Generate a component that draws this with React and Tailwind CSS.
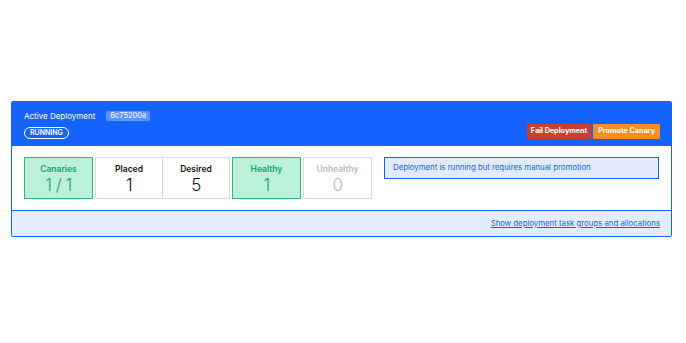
import React from "react";

const Stat = ({ label, value, tone = "plain", className = "" }) => {
  const tones = {
    success: "bg-[#bbf0d9] border-[#2eb67d] text-[#15a468]",
    plain: "bg-white border-[#d8dce3] text-[#111]",
    muted: "bg-white border-[#d8dce3] text-[#b4bac4]",
  };
  return (
    <div
      className={`flex flex-col items-center justify-center border h-[42px] pt-[1px] ${tones[tone]} ${className}`}
    >
      <div className="text-[8.5px] font-semibold leading-[12px]">{label}</div>
      <div className="text-[17px] font-light leading-[20px] tracking-[-0.5px]">{value}</div>
    </div>
  );
};

export default function App() {
  return (
    <div
      className="w-full h-[343px] bg-white pt-[101px] pl-[11px] pr-[14px]"
      style={{ fontFamily: "Inter, 'Noto Sans', sans-serif" }}
    >
      <div className="border border-[#1563ff] rounded-[2px] overflow-hidden">
        <div className="bg-[#1563ff] pl-[12px] pr-[11px] pt-[8px] pb-[6px] flex justify-between items-end">
          <div className="flex flex-col items-start">
            <div className="flex items-center">
              <span className="text-white text-[8px] leading-[12px]">Active Deployment</span>
              <span className="ml-[11px] bg-[#5d92ff] text-white text-[7.5px] leading-[10px] px-[4px] rounded-[1px]">
                6c75200a
              </span>
            </div>
            <span className="mt-[5px] border border-white rounded-full text-white text-[7px] font-semibold leading-[10px] px-[5px]">
              RUNNING
            </span>
          </div>
          <div className="flex gap-[2px]">
            <button className="bg-[#c9402f] text-white text-[7.2px] font-bold h-[15px] px-[4px] rounded-[1px]">
              Fail Deployment
            </button>
            <button className="bg-[#fb8e20] text-white text-[7.2px] font-bold h-[15px] px-[5px] rounded-[1px]">
              Promote Canary
            </button>
          </div>
        </div>
        <div className="bg-white px-[12px] pt-[11px] pb-[11px] flex items-start border-t border-[#1563ff]">
          <Stat label="Canaries" value="1 / 1" tone="success" className="w-[69px]" />
          <div className="flex ml-[2px]">
            <Stat label="Placed" value="1" className="w-[68px]" />
            <Stat label="Desired" value="5" className="w-[68px] -ml-px" />
          </div>
          <Stat label="Healthy" value="1" tone="success" className="w-[69px] ml-[2px]" />
          <Stat label="Unhealthy" value="0" tone="muted" className="w-[69px] ml-[2px]" />
          <div className="ml-[12px] flex-1 bg-[#e1eaff] border border-[#1563ff] h-[22px] flex items-center pl-[8px] text-[#1563ff] text-[7.8px]">
            Deployment is running but requires manual promotion
          </div>
        </div>
        <div className="bg-[#e4ecff] border-t border-[#1563ff] h-[26px] flex items-center justify-end pr-[11px]">
          <a className="text-[#1563ff] text-[7.8px] underline">
            Show deployment task groups and allocations
          </a>
        </div>
      </div>
    </div>
  );
}
